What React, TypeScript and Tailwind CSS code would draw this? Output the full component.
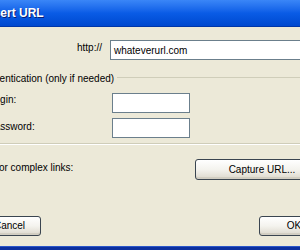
const XpButton = ({ label, width }: { label: string; width: string }) => (
  <button
    className={`${width} h-full rounded-[3px] border border-[#3a4550] bg-gradient-to-b from-white via-[#f4f3ee] to-[#dcd8cc] text-black shadow-[inset_0_-2px_0_#d2cec2] leading-none`}
  >
    {label}
  </button>
);

const App = () => {
  return (
    <div className="w-[300px] h-[250px] overflow-hidden bg-[#ECE9D8] text-[10px] text-black font-['Liberation_Sans',Arial,sans-serif]">
      <div className="-ml-[60px] w-[420px] h-full flex flex-col">
        {/* title bar */}
        <div className="h-[27px] flex items-center pl-[43px] bg-gradient-to-b from-[#3a86f7] via-[#0a5ce6] to-[#0048cf] border-b border-[#0036a8]">
          <span className="text-white font-bold text-[12px] leading-none [text-shadow:1px_1px_0_#0a1f73]">
            Insert URL
          </span>
        </div>

        <div className="flex-1 flex flex-col">
          {/* url row */}
          <div className="mt-[13px] h-[20px] flex items-center">
            <span className="ml-[137px] w-[33px] -mt-[6px]">http://</span>
            <div className="w-[250px] h-full border border-[#6b7f8c] bg-white flex items-center pl-[3px]">
              whateverurl.com
            </div>
          </div>

          {/* group header */}
          <div className="mt-[13px] h-[12px] flex items-start">
            <span className="ml-[39px] pr-[3px] leading-[12px]">Authentication (only if needed)</span>
            <div className="flex-1 mt-[4px] border-t border-[#cfcdb9]" />
          </div>

          {/* login */}
          <div className="mt-[8px] h-[20px] flex items-center">
            <span className="ml-[49px] w-[123px] -mt-[7px]">Login:</span>
            <div className="w-[78px] h-full border border-[#6b7f8c] bg-white" />
          </div>

          {/* password */}
          <div className="mt-[5px] h-[20px] flex items-center">
            <span className="ml-[48px] w-[124px] -mt-[4px]">Password:</span>
            <div className="w-[78px] h-full border border-[#6b7f8c] bg-white" />
          </div>

          <div className="mt-[5px] border-t border-[#cfcdb9] border-b border-b-white" />

          {/* capture row */}
          <div className="mt-[14px] h-[21px] flex items-center">
            <span className="ml-[0px] w-[255px] -mt-[4px]">For redirects or complex links:</span>
            <XpButton label="Capture URL..." width="w-[134px]" />
          </div>

          {/* bottom buttons */}
          <div className="mt-[36px] h-[20px] flex">
            <div className="ml-[38px]">
              <XpButton label="Cancel" width="w-[63px]" />
            </div>
            <div className="ml-[218px]">
              <XpButton label="OK" width="w-[70px]" />
            </div>
          </div>

          <div className="flex-1" />
          <div className="h-[4px] bg-[#0b2f9e] border-t border-[#2a56c9]" />
        </div>
      </div>
    </div>
  );
};

export default App;
